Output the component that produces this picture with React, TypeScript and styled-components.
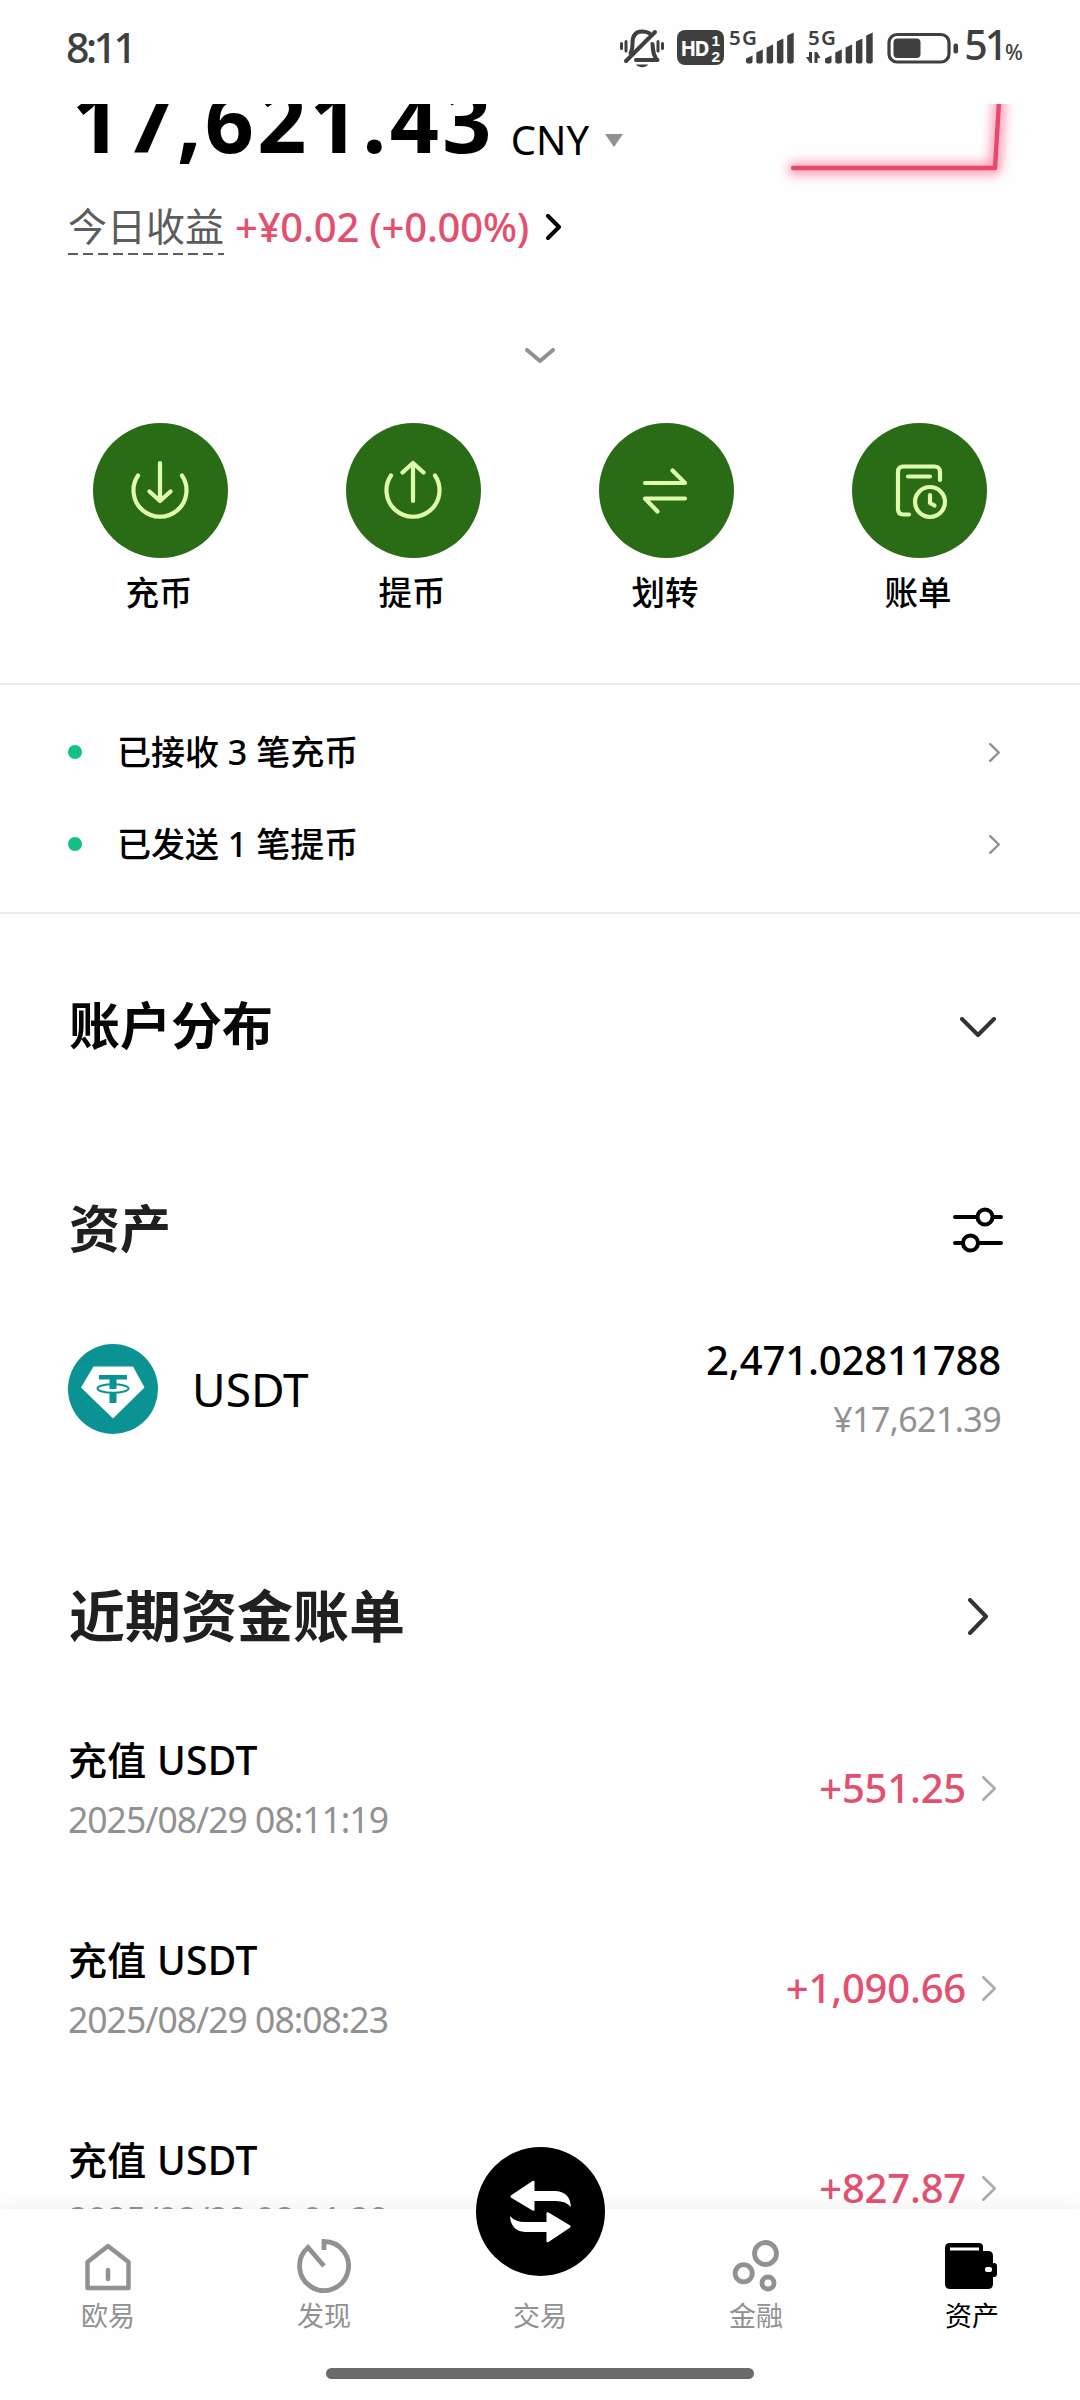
import React from "react";
import styled, { createGlobalStyle } from "styled-components";

const latin = `"Noto Sans", "Noto Sans CJK SC", sans-serif`;

const GlobalStyle = createGlobalStyle`
  * { box-sizing: border-box; }
  body { margin: 0; background: #fefefe; font-family: ${latin}; }
  svg { display: block; flex: none; }
`;

const Screen = styled.main`
  position: relative;
  width: 1080px;
  height: 2400px;
  overflow: hidden;
  display: flex;
  flex-direction: column;
  background: #fefefe;
  color: #000;
`;

const StatusBar = styled.header`
  flex: none;
  height: 104px;
  padding: 0 57px 8px 66px;
  display: flex;
  align-items: center;
  justify-content: space-between;
  color: #3f3f3f;
`;

const Clock = styled.span`
  margin-bottom: 2px;
  font-size: 41px;
  font-weight: 500;
  line-height: 56px;
  letter-spacing: -3.5px;
`;

const StatusIcons = styled.div`
  display: flex;
  align-items: center;
`;

const BatteryLevel = styled.span`
  display: flex;
  align-items: baseline;
  margin-left: 5px;
  font-size: 41px;
  font-weight: 500;
  line-height: 56px;
  letter-spacing: -3px;
`;

const Percent = styled.small`
  font-size: 21px;
  letter-spacing: 0;
`;

const Scroller = styled.section`
  height: 2105px;
  flex: none;
  overflow: hidden;
  display: flex;
  flex-direction: column;
`;

const Summary = styled.div`
  height: 160px;
  flex: none;
  padding: 0 60px 0 68px;
  display: flex;
  justify-content: space-between;
`;

const SummaryText = styled.div`
  display: flex;
  flex-direction: column;
`;

const BalanceRow = styled.div`
  height: 92px;
  margin-top: -30px;
  display: flex;
  align-items: baseline;
`;

const Balance = styled.span`
  margin-left: 4px;
  font-size: 86px;
  font-weight: 700;
  line-height: 92px;
  letter-spacing: 3.3px;
`;

const Currency = styled.span`
  margin-left: 16px;
  font-size: 40px;
  line-height: 60px;
  transform: translateY(2px);
`;

const Caret = styled.i`
  margin-left: 16px;
  align-self: center;
  margin-top: 40px;
  border: 9px solid transparent;
  border-top: 13px solid #919191;
  border-bottom: 0;
`;

const ProfitRow = styled.div`
  display: flex;
  align-items: center;
  height: 60px;
  margin-top: 31px;
`;

const ProfitLabel = styled.span`
  height: 55px;
  width: 156px;
  padding-top: 1px;
  font-size: 39px;
  line-height: 50px;
  color: #5c5c5c;
  background: repeating-linear-gradient(90deg, #5c5c5c 0 10px, transparent 10px 15px) bottom / 100% 2px no-repeat;
`;

const Profit = styled.span`
  margin: 0 17px 0 11px;
  font-size: 40px;
  font-weight: 500;
  line-height: 50px;
  letter-spacing: -0.2px;
  color: #e3506f;
`;

const Fold = styled.div`
  height: 159px;
  flex: none;
  display: flex;
  justify-content: center;
  align-items: center;
  padding-top: 24px;
`;

const Actions = styled.nav`
  height: 260px;
  flex: none;
  padding: 0 34px;
  display: grid;
  grid-template-columns: repeat(4, 253px);
`;

const Action = styled.div`
  display: flex;
  flex-direction: column;
  align-items: center;
`;

const ActionDisc = styled.div`
  width: 135px;
  height: 135px;
  padding-right: 2px;
  border-radius: 50%;
  display: grid;
  place-items: center;
  background: #2a6c16;
`;

const ActionLabel = styled.span`
  margin: 9px 3px 0 0;
  font-size: 33.5px;
  font-weight: 500;
  line-height: 50px;
`;

const Notices = styled.ul`
  height: 231px;
  flex: none;
  margin: 0;
  padding: 21px 80px 0 68px;
  list-style: none;
  border: solid #ebebeb;
  border-width: 2px 0;
`;

const Notice = styled.li`
  display: flex;
  align-items: center;
  height: 92px;
`;

const Dot = styled.i`
  width: 14px;
  height: 14px;
  border-radius: 50%;
  background: #10c088;
`;

const NoticeText = styled.span`
  flex: 1;
  margin: 0 0 4px 35px;
  font-size: 34px;
  font-weight: 500;
`;

const SectionHead = styled.div<{ $height: number; $right: number }>`
  height: ${(p) => p.$height}px;
  flex: none;
  padding: 0 ${(p) => p.$right}px 0 69px;
  display: flex;
  align-items: center;
  justify-content: space-between;
`;

const SectionTitle = styled.h2<{ $size?: number; $color?: string }>`
  margin: 0 0 4px;
  font-size: ${(p) => p.$size ?? 51}px;
  line-height: 70px;
  font-weight: 700;
  color: ${(p) => p.$color ?? "#202020"};
`;

const AssetRow = styled.div`
  height: 100px;
  flex: none;
  margin: 19px 0 104px;
  padding: 0 79px 0 68px;
  display: flex;
  align-items: center;
`;

const AssetName = styled.span`
  flex: 1;
  margin-left: 34px;
  font-size: 46px;
`;

const AssetValue = styled.div`
  display: flex;
  flex-direction: column;
  align-items: flex-end;
  padding-top: 3px;
`;

const Quantity = styled.span`
  font-size: 40px;
  line-height: 58px;
  font-weight: 500;
  letter-spacing: -0.1px;
`;

const Fiat = styled.span`
  font-size: 34px;
  line-height: 61px;
  letter-spacing: -0.6px;
  color: #919191;
`;

const Bill = styled.div`
  height: 200px;
  flex: none;
  padding: 0 84px 0 68px;
  display: flex;
  align-items: center;
`;

const BillInfo = styled.div`
  flex: 1;
  display: flex;
  flex-direction: column;
`;

const BillTitle = styled.span`
  font-size: 39px;
  line-height: 58px;
  font-weight: 500;
  letter-spacing: 0.3px;
`;

const BillTime = styled.span`
  font-size: 35.5px;
  line-height: 60px;
  color: #919191;
  letter-spacing: -1px;
`;

const BillValue = styled.div`
  display: flex;
  align-items: center;
  margin-bottom: 4px;
`;

const BillAmount = styled.span`
  margin-right: 16px;
  font-size: 40px;
  line-height: 60px;
  font-weight: 500;
  letter-spacing: -0.2px;
  color: #e3506f;
`;

const TabBar = styled.footer`
  position: relative;
  flex: none;
  height: 191px;
  padding-top: 26px;
  display: grid;
  grid-template-columns: repeat(5, 216px);
  align-content: start;
  background: #fefefe;
  box-shadow: 0 -2px 18px rgba(0, 0, 0, 0.06);
`;

const Tab = styled.div<{ $active?: boolean }>`
  display: flex;
  flex-direction: column;
  align-items: center;
  color: ${(p) => (p.$active ? "#000" : "#919191")};
`;

const TabIcon = styled.div`
  width: 64px;
  height: 64px;
`;

const TabLabel = styled.span`
  font-size: 27px;
  line-height: 34px;
`;

const TradeButton = styled.div`
  position: absolute;
  left: 476px;
  top: -62px;
  width: 129px;
  height: 129px;
  border-radius: 50%;
  background: #000;
`;

const HomeIndicator = styled.div`
  position: absolute;
  left: 326px;
  top: 159px;
  width: 428px;
  height: 11px;
  border-radius: 6px;
  background: #6a6a6a;
`;

type ChevronProps = { w: number; h: number; color: string; stroke: number; down?: boolean };

const Chevron = ({ w, h, color, stroke, down }: ChevronProps) => {
  const s = stroke / 2;
  const d = down
    ? `M${s} ${s}L${w / 2} ${h - s}L${w - s} ${s}`
    : `M${s} ${s}L${w - s} ${h / 2}L${s} ${h - s}`;
  return (
    <svg width={w} height={h} fill="none" stroke={color} strokeWidth={stroke} strokeLinecap="round" strokeLinejoin="round">
      <path d={d} />
    </svg>
  );
};

const StatusGlyphs = () => (
  <svg width="340" height="56" viewBox="0 0 340 56" fill="#3f3f3f">
    <g fill="none" stroke="#3f3f3f" strokeWidth="4" strokeLinecap="round" strokeLinejoin="round">
      <path d="M7 41L36 12" />
      <path d="M11.500 33C13.500 30 13.500 27 13.500 23C13.500 15 17 11.500 23 11.500C26 11.500 28 12 30 13" />
      <path d="M17 40H38.500C35 37 34 33 33.500 24" />
      <path d="M2.500 23.500V28.500M7 21.500V31M39 21.500V31M43.500 23.500V28.500" strokeWidth="3" />
    </g>
    <path d="M17 44.500H29C27 48 19.500 48 17 44.500Z" />
    <rect x="58" y="10" width="47" height="35" rx="8" />
    <text x="61.500" y="35.500" fontSize="20.500" fontWeight="700" fill="#fff" textLength="29">HD</text>
    <text x="92.500" y="26" fontSize="15.500" fontWeight="700" fill="#fff" fontFamily="Liberation Sans, sans-serif">1</text>
    <text x="92.500" y="42" fontSize="15.500" fontWeight="700" fill="#fff" fontFamily="Liberation Sans, sans-serif">2</text>
    <text x="110" y="25" fontSize="20.500" fontWeight="600" textLength="28">5G</text>
    <text x="189" y="25" fontSize="20.500" fontWeight="600" textLength="28">5G</text>
    {[127, 206].map((x) => (
      <g key={x}>
        {[8, 14, 19, 25, 31].map((h, i) => (
          <path key={h} d={`M${x + i * 10.3} ${43.5 - h + 3}l6.500 -3V41.500q0 2 -2 2h-2.500q-2 0 -2 -2Z`} />
        ))}
      </g>
    ))}
    <path d="M187 37H190V32H193V43H191ZM195.500 32H198L201.500 38H198.500V43H195.500Z" />
    <rect x="270" y="14.500" width="60" height="27.500" rx="8" fill="none" stroke="#3f3f3f" strokeWidth="3.200" />
    <rect x="274.500" y="18.500" width="27" height="19.500" rx="4" />
    <rect x="334.500" y="23.500" width="4.500" height="10" rx="2" />
  </svg>
);

const Sparkline = () => (
  <svg width="240" height="100" viewBox="780 104 240 100">
    <defs>
      <filter id="glow" filterUnits="userSpaceOnUse" x="760" y="80" width="280" height="140">
        <feGaussianBlur stdDeviation="6" />
      </filter>
    </defs>
    <g fill="none" strokeLinecap="round" strokeLinejoin="round">
      <path d="M793 169H995L1000 94" stroke="#ff4f78" strokeWidth="10" opacity="0.7" filter="url(#glow)" />
      <path d="M793 168H995L999.5 94" stroke="#e5496d" strokeWidth="4.4" />
    </g>
  </svg>
);

const lime = { fill: "none", stroke: "#e0ffac", strokeWidth: 4.2, strokeLinecap: "round", strokeLinejoin: "round" } as const;

const DepositIcon = () => (
  <svg width="68" height="68" {...lime}>
    <path d="M12 18.5A26.5 26.5 0 1 0 56 18.5M34 6V44M23.5 34.5L34 44L44.5 34.5" />
  </svg>
);
const WithdrawIcon = () => (
  <svg width="68" height="68" {...lime}>
    <path d="M12 18.5A26.5 26.5 0 1 0 56 18.5M34 6V44M23.5 15.5L34 6L44.5 15.5" />
  </svg>
);
const TransferIcon = () => (
  <svg width="68" height="68" {...lime}>
    <path d="M13 26H53L40.500 13.500M53 41.500H13L25.500 54.500" />
  </svg>
);
const HistoryIcon = () => (
  <svg width="68" height="68" {...lime}>
    <path d="M55 23V15Q55 9.500 49.500 9.500H18.500Q13 9.500 13 15V52Q13 57.500 18.500 57.500H24M23 19.500H45" />
    <circle cx="45" cy="45" r="15" />
    <path d="M45 38V46L49.500 48.500" />
  </svg>
);

const FilterIcon = () => (
  <svg width="50" height="46" fill="#fefefe" stroke="#000" strokeWidth="4" strokeLinecap="round">
    <path d="M2 10H48M2 36H48" />
    <circle cx="32" cy="10" r="7.500" />
    <circle cx="17.500" cy="36" r="7.500" />
  </svg>
);

const TetherIcon = () => (
  <svg width="90" height="90">
    <circle cx="45" cy="45" r="45" fill="#0a9392" />
    <path d="M25.500 22.500H65L76.500 43.500L45 74.500L13 43.500Z" fill="#fff" />
    <path d="M31 31H59V35.500H48.500V45H41.500V35.500H31ZM41.500 48.500H48.500V59H41.500Z" fill="#0a9392" />
    <ellipse cx="45" cy="44.500" rx="15.500" ry="4.200" fill="none" stroke="#0a9392" strokeWidth="2" />
  </svg>
);

const HomeIcon = () => (
  <svg width="64" height="64" fill="none" stroke="currentColor" strokeWidth="4.500" strokeLinejoin="round">
    <path d="M11.500 27L32 11L52.500 27V53H11.500Z" />
    <path d="M32 35V44" strokeLinecap="round" />
  </svg>
);
const DiscoverIcon = () => (
  <svg width="64" height="64" fill="none" stroke="currentColor" strokeWidth="4.800">
    <path d="M32 15V6.500A24.500 24.500 0 1 1 16 12.500L32 31" />
  </svg>
);
const FinanceIcon = () => (
  <svg width="64" height="64" fill="none" stroke="currentColor" strokeWidth="4.800">
    <circle cx="41.500" cy="18.500" r="11" />
    <circle cx="19.700" cy="38.300" r="8.600" />
    <circle cx="44" cy="48" r="6" />
  </svg>
);
const WalletIcon = () => (
  <svg width="64" height="64" viewBox="4 0 64 64" fill="currentColor">
    <path d="M14 8H43Q47 8 47 12V16H52Q57 16 57 21V28H58Q61 28 61 31V39Q61 42 58 42H57V49Q57 54 52 54H14Q9 54 9 49V13Q9 8 14 8Z" />
    <path d="M14 12.500H43V15.500H14Z" fill="#fff" />
    <rect x="49" y="32" width="7" height="5" rx="2" fill="#fff" />
  </svg>
);

const tradeArrow = "M34.800 48.500L56.500 34Q58.500 33 58.500 35V44H80Q94 45 95 60Q90 54 80 54H58.500V62.500Q58.500 64.500 56.500 63.500L34.800 50.500Q34 49.500 34.800 48.500Z";

const TradeIcon = () => (
  <svg width="129" height="129" fill="#fff">
    <path d={tradeArrow} />
    <path d={tradeArrow} transform="rotate(180 64.5 64.5)" />
  </svg>
);

const actions = [
  { label: "充币", icon: <DepositIcon /> },
  { label: "提币", icon: <WithdrawIcon /> },
  { label: "划转", icon: <TransferIcon /> },
  { label: "账单", icon: <HistoryIcon /> },
];

const bills = [
  { time: "2025/08/29 08:11:19", amount: "+551.25" },
  { time: "2025/08/29 08:08:23", amount: "+1,090.66" },
  { time: "2025/08/29 08:01:29", amount: "+827.87" },
];

const tabs = [
  { label: "欧易", icon: <HomeIcon /> },
  { label: "发现", icon: <DiscoverIcon /> },
  { label: "交易", icon: null },
  { label: "金融", icon: <FinanceIcon /> },
  { label: "资产", icon: <WalletIcon />, active: true },
];

export default function App() {
  return (
    <Screen>
      <GlobalStyle />
      <StatusBar>
        <Clock>8:11</Clock>
        <StatusIcons>
          <StatusGlyphs />
          <BatteryLevel>51<Percent>%</Percent></BatteryLevel>
        </StatusIcons>
      </StatusBar>
      <Scroller>
        <Summary>
          <SummaryText>
            <BalanceRow>
              <Balance>17,621.43</Balance>
              <Currency>CNY</Currency>
              <Caret />
            </BalanceRow>
            <ProfitRow>
              <ProfitLabel>今日收益</ProfitLabel>
              <Profit>+¥0.02 (+0.00%)</Profit>
              <Chevron w={15} h={26} color="#000" stroke={4} />
            </ProfitRow>
          </SummaryText>
          <Sparkline />
        </Summary>
        <Fold><Chevron down w={30} h={15} color="#919191" stroke={4} /></Fold>
        <Actions>
          {actions.map((a) => (
            <Action key={a.label}>
              <ActionDisc>{a.icon}</ActionDisc>
              <ActionLabel>{a.label}</ActionLabel>
            </Action>
          ))}
        </Actions>
        <Notices>
          {["已接收 3 笔充币", "已发送 1 笔提币"].map((t) => (
            <Notice key={t}>
              <Dot />
              <NoticeText>{t}</NoticeText>
              <Chevron w={11} h={19} color="#919191" stroke={2.4} />
            </Notice>
          ))}
        </Notices>
        <SectionHead $height={226} $right={84}>
          <SectionTitle $color="#060606">账户分布</SectionTitle>
          <Chevron down w={36} h={20} color="#333" stroke={4} />
        </SectionHead>
        <SectionHead $height={180} $right={77}>
          <SectionTitle>资产</SectionTitle>
          <FilterIcon />
        </SectionHead>
        <AssetRow>
          <TetherIcon />
          <AssetName>USDT</AssetName>
          <AssetValue>
            <Quantity>2,471.02811788</Quantity>
            <Fiat>¥17,621.39</Fiat>
          </AssetValue>
        </AssetRow>
        <SectionHead $height={147} $right={92}>
          <SectionTitle $size={56}>近期资金账单</SectionTitle>
          <Chevron w={20} h={37} color="#333" stroke={4} />
        </SectionHead>
        {bills.map((b) => (
          <Bill key={b.time}>
            <BillInfo>
              <BillTitle>充值 USDT</BillTitle>
              <BillTime>{b.time}</BillTime>
            </BillInfo>
            <BillValue>
              <BillAmount>{b.amount}</BillAmount>
              <Chevron w={14} h={25} color="#ababab" stroke={2.6} />
            </BillValue>
          </Bill>
        ))}
      </Scroller>
      <TabBar>
        {tabs.map((t) => (
          <Tab key={t.label} $active={t.active}>
            <TabIcon>{t.icon}</TabIcon>
            <TabLabel>{t.label}</TabLabel>
          </Tab>
        ))}
        <TradeButton><TradeIcon /></TradeButton>
        <HomeIndicator />
      </TabBar>
    </Screen>
  );
}
